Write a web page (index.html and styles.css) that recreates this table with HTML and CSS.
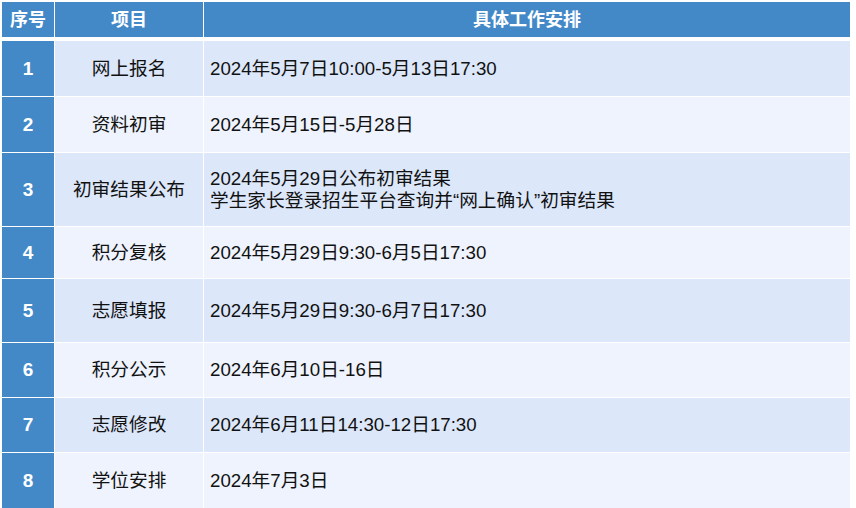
FILE: index.html
```html
<!DOCTYPE html>
<html lang="zh">
<head>
<meta charset="utf-8">
<link rel="stylesheet" href="styles.css">
</head>
<body>
<div class="schedule">
  <div class="cell head">序号</div>
  <div class="cell head">项目</div>
  <div class="cell head">具体工作安排</div>

  <div class="cell num">1</div>
  <div class="cell item dark">网上报名</div>
  <div class="cell plan dark">2024年5月7日10:00-5月13日17:30</div>

  <div class="cell num">2</div>
  <div class="cell item light">资料初审</div>
  <div class="cell plan light">2024年5月15日-5月28日</div>

  <div class="cell num">3</div>
  <div class="cell item dark">初审结果公布</div>
  <div class="cell plan dark">2024年5月29日公布初审结果<br>学生家长登录招生平台查询并“网上确认”初审结果</div>

  <div class="cell num">4</div>
  <div class="cell item light">积分复核</div>
  <div class="cell plan light">2024年5月29日9:30-6月5日17:30</div>

  <div class="cell num">5</div>
  <div class="cell item dark">志愿填报</div>
  <div class="cell plan dark">2024年5月29日9:30-6月7日17:30</div>

  <div class="cell num">6</div>
  <div class="cell item light">积分公示</div>
  <div class="cell plan light">2024年6月10日-16日</div>

  <div class="cell num">7</div>
  <div class="cell item dark">志愿修改</div>
  <div class="cell plan dark">2024年6月11日14:30-12日17:30</div>

  <div class="cell num">8</div>
  <div class="cell item light">学位安排</div>
  <div class="cell plan light">2024年7月3日</div>
</div>
</body>
</html>
```
FILE: styles.css
```css
html, body {
  margin: 0;
  padding: 0;
  background: #ffffff;
}
body {
  padding: 2px 0 0 2px;
  font-family: "Liberation Sans", "Noto Sans CJK SC", sans-serif;
  overflow: hidden;
  height: 508px;
  box-sizing: border-box;
}
.schedule {
  display: grid;
  grid-template-columns: 52px 148px 646px;
  grid-template-rows: 38px 55px 55px 73px 51px 63px 54px 54px 56px;
  column-gap: 1px;
  row-gap: 1px;
}
.cell {
  display: flex;
  align-items: center;
  color: #111;
  font-size: 18.7px;
  line-height: 22px;
}
.head {
  background: #4389c8;
  color: #ffffff;
  font-weight: bold;
  font-size: 18px;
  justify-content: center;
  margin-bottom: 3px;
}
.num {
  background: #4389c8;
  color: #ffffff;
  font-weight: bold;
  font-size: 19px;
  justify-content: center;
}
.item {
  justify-content: center;
}
.plan {
  padding-left: 6px;
}
.dark {
  background: #dce7fa;
}
.light {
  background: #eef3fd;
}
```
